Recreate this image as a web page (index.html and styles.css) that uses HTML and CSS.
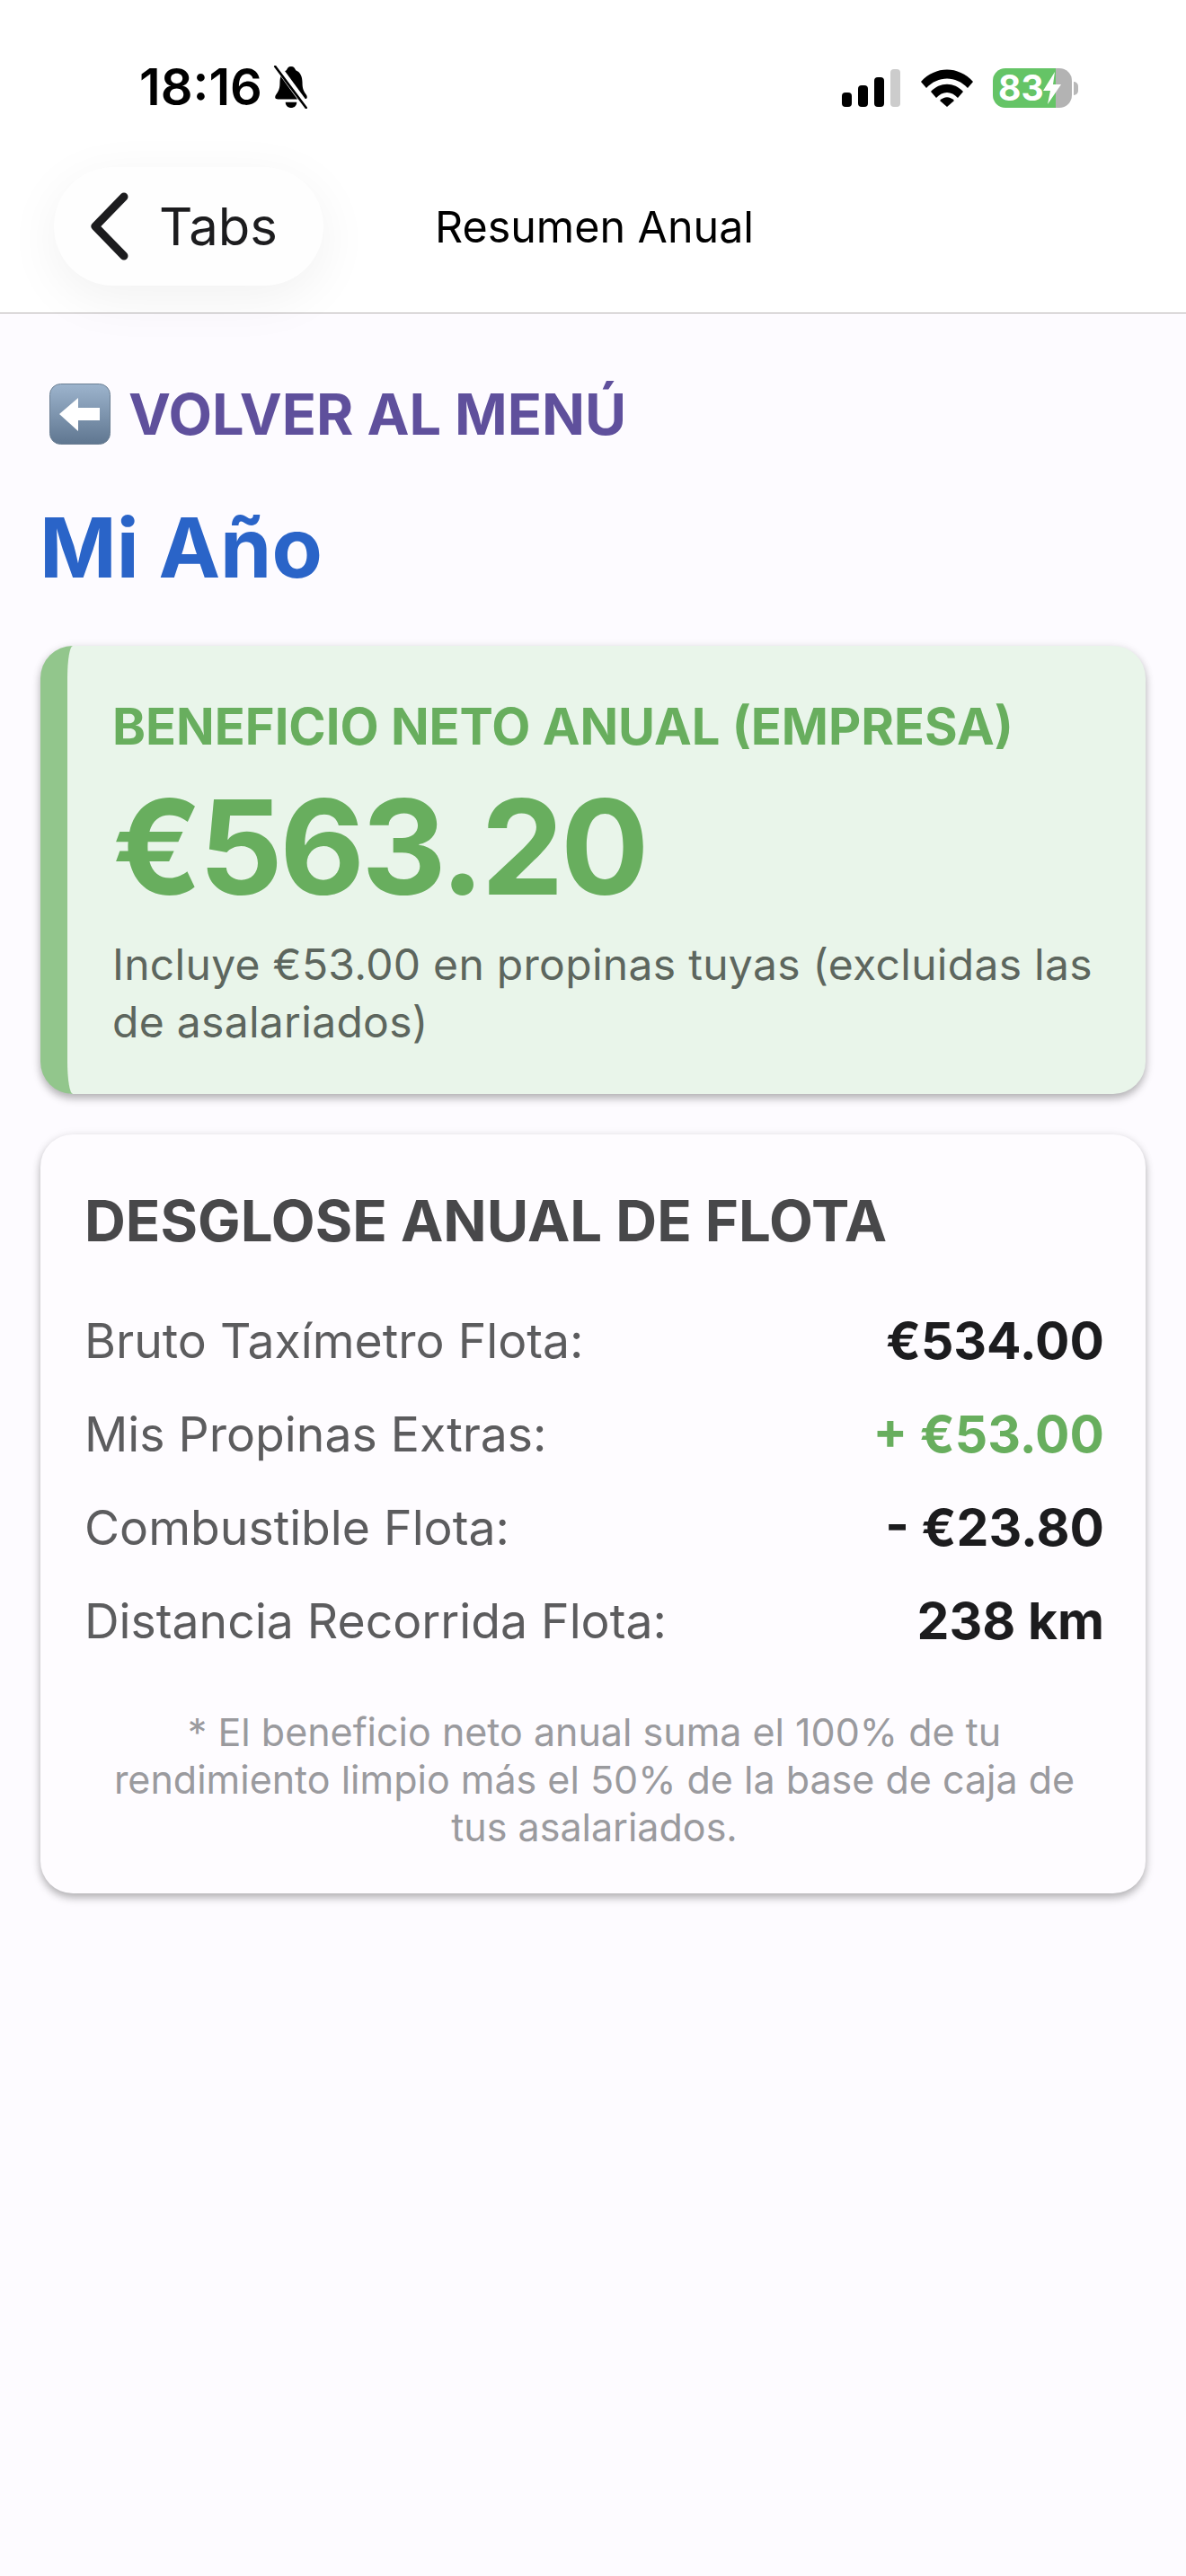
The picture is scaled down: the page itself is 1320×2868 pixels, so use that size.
FILE: index.html
```html
<!DOCTYPE html>
<html lang="es">
<head>
  <meta charset="UTF-8">
  <title>Resumen Anual</title>
  <link rel="stylesheet" href="styles.css">
</head>
<body>

  <header class="cabecera">
    <div class="estado">
      <div class="estado-izq">
        <span class="hora">18:16</span>
        <svg class="campana" viewBox="0 0 36 46" width="44" height="48">
          <path d="M18 1c3 0 4 2 5 4 5 2 7 7 7 13 0 6 1 9 4 13 2 3 1 5-2 5H4c-3 0-4-2-2-5 3-4 4-7 4-13 0-6 2-11 7-13 1-2 2-4 5-4z"/>
          <path d="M12 39h12c0 4-3 6-6 6s-6-2-6-6z"/>
          <path d="M2 -1 35 44" stroke="#fff" stroke-width="7"/>
          <path d="M1 1 34 45" stroke="#000" stroke-width="2.5" stroke-linecap="round"/>
        </svg>
      </div>
      <div class="estado-der">
        <svg class="cobertura" viewBox="0 0 66 42" width="66" height="42">
          <rect x="0" y="26" width="11" height="16" rx="4" fill="#000"/>
          <rect x="18" y="18" width="11" height="24" rx="4" fill="#000"/>
          <rect x="36" y="9" width="11" height="33" rx="4" fill="#000"/>
          <rect x="54" y="0" width="11" height="42" rx="4" fill="#ccc"/>
        </svg>
        <svg class="wifi" viewBox="0 0 58 42" width="58" height="42">
          <path d="M0 14C16 -4 42 -4 58 14L52 21C39 7 19 7 6 21Z"/>
          <path d="M11 25C21 14 37 14 47 25L41 32C34 24 24 24 17 32Z"/>
          <path d="M21 35C26 30 32 30 37 35L29 42Z"/>
        </svg>
        <div class="bateria">
          <div class="bateria-cuerpo">
            <span class="bateria-num">83</span>
            <svg class="rayo" viewBox="0 0 20 36" width="20" height="36">
              <path d="M13 0 0 21H8L5 36 20 14H11Z" fill="#fff"/>
            </svg>
          </div>
          <span class="bateria-punta"></span>
        </div>
      </div>
    </div>

    <nav class="barra">
      <a class="volver-tabs">
        <svg viewBox="0 0 44 76" width="44" height="76">
          <path d="M38 5 6 38 38 71" fill="none" stroke="#1c1c1e" stroke-width="9" stroke-linecap="round" stroke-linejoin="round"/>
        </svg>
        <span>Tabs</span>
      </a>
      <span class="barra-titulo">Resumen Anual</span>
    </nav>
  </header>

  <main class="contenido">
    <a class="volver-menu">
      <svg class="emoji" viewBox="0 0 68 68" width="68" height="68">
        <defs>
          <linearGradient id="azul" x1="0" y1="0" x2="0" y2="1">
            <stop offset="0" stop-color="#9db4cd"/>
            <stop offset="1" stop-color="#5f7690"/>
          </linearGradient>
        </defs>
        <rect x="0.5" y="0.5" width="67" height="67" rx="12" fill="url(#azul)" stroke="#6d8094"/>
        <path d="M11 34 32 16V27H56V41H32V53Z" fill="#fff"/>
      </svg>
      <span>VOLVER AL MENÚ</span>
    </a>

    <h1>Mi Año</h1>

    <section class="tarjeta tarjeta-neto">
      <h2>BENEFICIO NETO ANUAL (EMPRESA)</h2>
      <p class="importe">€563.20</p>
      <p class="nota-neto">Incluye €53.00 en propinas tuyas (excluidas las de asalariados)</p>
    </section>

    <section class="tarjeta tarjeta-desglose">
      <h3>DESGLOSE ANUAL DE FLOTA</h3>
      <div class="fila"><span>Bruto Taxímetro Flota:</span><strong>€534.00</strong></div>
      <div class="fila"><span>Mis Propinas Extras:</span><strong class="verde">+ €53.00</strong></div>
      <div class="fila"><span>Combustible Flota:</span><strong>- €23.80</strong></div>
      <div class="fila"><span>Distancia Recorrida Flota:</span><strong>238 km</strong></div>
      <p class="aclaracion">* El beneficio neto anual suma el 100% de tu rendimiento limpio más el 50% de la base de caja de tus asalariados.</p>
    </section>
  </main>

</body>
</html>
```

FILE: styles.css
```css
* {
  box-sizing: border-box;
}

html, body {
  margin: 0;
  padding: 0;
}

body {
  width: 1320px;
  min-height: 2868px;
  font-family: Inter, "Liberation Sans", sans-serif;
  background: #fdfbff;
  color: #1c1c1e;
}

.cabecera {
  background: #fff;
  height: 349px;
  border-bottom: 1px solid #b5b2b2;
}

.estado {
  height: 186px;
  padding: 68px 120px 0 155px;
  display: flex;
  justify-content: space-between;
  align-items: flex-start;
}

.estado-izq {
  display: flex;
  align-items: center;
  gap: 10px;
  color: #000;
}

.hora {
  font-size: 56px;
  line-height: 58px;
  font-weight: 600;
}

.estado-der {
  display: flex;
  align-items: center;
  gap: 22px;
  padding-top: 8px;
}

.bateria {
  display: flex;
  align-items: center;
  gap: 2px;
}

.bateria-cuerpo {
  width: 88px;
  height: 44px;
  border-radius: 14px;
  background: linear-gradient(90deg, #65c466 0, #65c466 80%, #b3b3b3 80%);
  color: #fff;
  font-size: 39px;
  font-weight: 700;
  display: flex;
  align-items: center;
  padding-left: 6px;
}

.bateria-num {
  line-height: 44px;
}

.rayo {
  margin-left: -1px;
}

.bateria-punta {
  width: 5px;
  height: 15px;
  border-radius: 0 8px 8px 0;
  background: #b8b8b8;
}

.barra {
  height: 162px;
  display: flex;
  align-items: flex-start;
}

.volver-tabs {
  margin-left: 60px;
  width: 300px;
  height: 132px;
  border-radius: 66px;
  background: #fefefe;
  box-shadow: 0 14px 60px rgba(0, 0, 0, 0.06);
  display: flex;
  align-items: center;
  gap: 33px;
  padding-left: 40px;
  font-size: 58px;
  color: #1c1c1e;
}

.barra-titulo {
  margin-left: 124px;
  line-height: 134px;
  font-size: 48.4px;
  color: #000;
}

.contenido {
  padding: 0 45px;
}

.volver-menu {
  display: flex;
  align-items: center;
  gap: 20px;
  margin: 78px 0 0 10px;
  height: 68px;
  font-size: 63px;
  font-weight: 700;
  color: #5f509c;
}

h1 {
  margin: 58px 0 0 -1px;
  font-size: 92px;
  line-height: 114px;
  font-weight: 700;
  color: #2a64c8;
}

.tarjeta {
  border-radius: 36px;
  box-shadow: 0 5px 10px rgba(0, 0, 0, 0.28), 0 0 12px rgba(0, 0, 0, 0.05);
}

.tarjeta-neto {
  margin-top: 52px;
  height: 499px;
  padding: 58px 36px 0 50px;
  background: #e9f5ea;
  border-left: 30px solid #92c68c;
}

h2 {
  margin: 0;
  font-size: 56px;
  line-height: 64px;
  font-weight: 700;
  color: #68ae5e;
}

.importe {
  margin: 22px 0 0;
  font-size: 146px;
  line-height: 160px;
  font-weight: 700;
  letter-spacing: -3.5px;
  color: #68ae5e;
}

.nota-neto {
  margin: 19px 0 0;
  font-size: 48px;
  line-height: 64px;
  letter-spacing: 0.3px;
  color: #5d665e;
}

.tarjeta-desglose {
  margin-top: 45px;
  height: 845px;
  padding: 58px 46px 0 49px;
  background: #fefcff;
}

h3 {
  margin: 0 0 43px;
  font-size: 63.5px;
  line-height: 76px;
  font-weight: 700;
  color: #48484a;
}

.fila {
  height: 104px;
  display: flex;
  justify-content: space-between;
  align-items: center;
  font-size: 53.5px;
  color: #5c5c5e;
}

.fila strong {
  font-size: 57px;
  font-weight: 700;
  color: #1c1c1e;
}

.fila strong.verde {
  color: #68ae5e;
}

.aclaracion {
  margin: 46px 0 0;
  font-size: 43px;
  line-height: 53px;
  text-align: center;
  color: #9a9a9e;
}
```
